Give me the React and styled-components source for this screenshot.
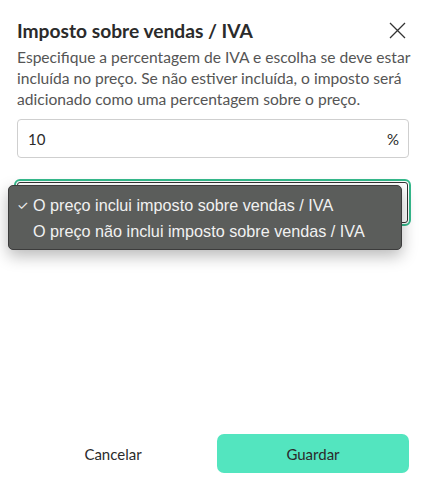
import React from "react"
import styled, { createGlobalStyle } from "styled-components"

const GlobalStyle = createGlobalStyle`
  html, body {
    margin: 0;
    padding: 0;
    background: #ffffff;
  }
  body {
    font-family: "Lato", "Noto Sans", sans-serif;
    color: #2b2b2b;
  }
`

const Modal = styled.div`
  width: 423px;
  height: 484px;
  box-sizing: border-box;
  padding: 18px 14px 11px 17px;
  display: flex;
  flex-direction: column;
  position: relative;
`

const Header = styled.div`
  display: flex;
  align-items: flex-start;
  justify-content: space-between;
`

const Title = styled.h1`
  margin: 0;
  font-size: 19.2px;
  font-weight: 700;
  line-height: 26px;
  color: #2b2b2b;
`

const CloseButton = styled.button`
  border: 0;
  background: none;
  padding: 0;
  margin: 4px 3px 0 0;
  width: 17px;
  height: 17px;
  cursor: pointer;
  display: flex;
`

const Description = styled.p`
  margin: 3px 0 0;
  font-size: 15.6px;
  line-height: 21px;
  color: #555555;
  white-space: nowrap;
`

const InputBox = styled.div`
  margin-top: 9px;
  height: 39px;
  box-sizing: border-box;
  border: 1px solid #cfcfcf;
  border-radius: 4px;
  display: flex;
  align-items: center;
  justify-content: space-between;
  padding: 0 9px 0 10px;
  font-size: 15px;
  color: #2b2b2b;
`

const SelectWrap = styled.div`
  position: relative;
  margin: 21px 0 0 -3px;
  width: 397px;
  height: 47px;
  box-sizing: border-box;
  border: 2px solid #35b98c;
  border-radius: 6px;
  padding: 1px;
`

const SelectInner = styled.div`
  height: 100%;
  box-sizing: border-box;
  border: 1px solid #333;
  border-radius: 3px;
`

const Menu = styled.ul`
  position: absolute;
  left: -8px;
  top: 4px;
  width: 394px;
  box-sizing: border-box;
  margin: 0;
  padding: 6px 0 5px;
  list-style: none;
  background: #5b5d5b;
  border: 1px solid #3c3c3c;
  border-radius: 5px;
  box-shadow: 0 6px 16px rgba(0, 0, 0, 0.28);
  font-family: "Liberation Sans", "Inter", sans-serif;
  font-size: 16.2px;
  color: #f1f1f1;
`

const MenuItem = styled.li`
  display: flex;
  align-items: center;
  height: 26px;
  padding-left: 8px;
`

const Check = styled.span`
  width: 16px;
  font-size: 13px;
  visibility: ${(p) => (p.$on ? "visible" : "hidden")};
`

const Footer = styled.div`
  margin-top: auto;
  display: grid;
  grid-template-columns: 1fr 192px;
  gap: 8px;
  align-items: center;
`

const Button = styled.button`
  height: 39px;
  border: 0;
  border-radius: 7px;
  font-family: inherit;
  font-size: 15px;
  color: #2b2b2b;
  background: ${(p) => (p.$primary ? "#53e5bf" : "transparent")};
  cursor: pointer;
`

export default function App() {
  return (
    <>
      <GlobalStyle />
      <Modal>
        <Header>
          <Title>Imposto sobre vendas / IVA</Title>
          <CloseButton aria-label="Fechar">
            <svg width="17" height="17" viewBox="0 0 17 17">
              <path d="M1 1L16 16M16 1L1 16" stroke="#333" strokeWidth="1.3" />
            </svg>
          </CloseButton>
        </Header>
        <Description>
          Especifique a percentagem de IVA e escolha se deve estar
          <br />
          incluída no preço. Se não estiver incluída, o imposto será
          <br />
          adicionado como uma percentagem sobre o preço.
        </Description>
        <InputBox>
          <span>10</span>
          <span>%</span>
        </InputBox>
        <SelectWrap>
          <SelectInner />
          <Menu>
            <MenuItem>
              <Check $on>✓</Check>O preço inclui imposto sobre vendas / IVA
            </MenuItem>
            <MenuItem>
              <Check>✓</Check>O preço não inclui imposto sobre vendas / IVA
            </MenuItem>
          </Menu>
        </SelectWrap>
        <Footer>
          <Button>Cancelar</Button>
          <Button $primary>Guardar</Button>
        </Footer>
      </Modal>
    </>
  )
}
